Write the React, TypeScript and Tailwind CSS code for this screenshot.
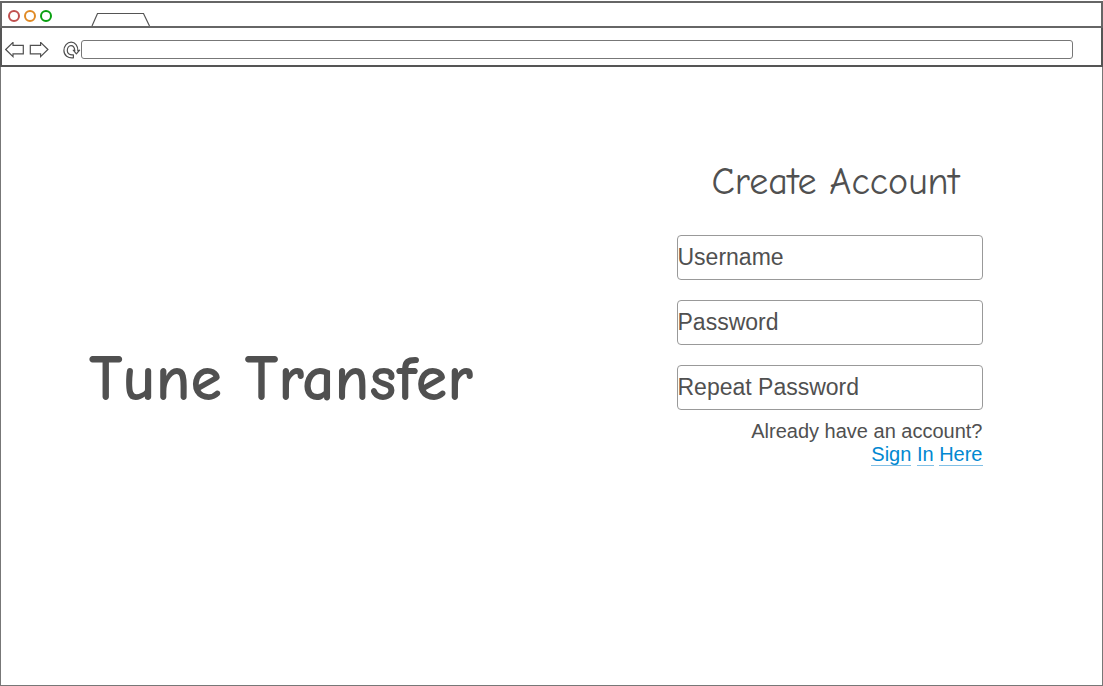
import React from "react";

const hand = "font-['Comic_Sans_MS','Comic_Neue','DejaVu_Sans',sans-serif]";

function TitleBar() {
  return (
    <div className="flex h-[27px] shrink-0 items-end border-x-2 border-y-2 border-[#666666] bg-white">
      <div className="flex gap-1 pb-1 pl-[6px]">
        <button type="button" aria-label="Close" className="size-3 rounded-full border-2 border-[#c0504f]" />
        <button type="button" aria-label="Minimize" className="size-3 rounded-full border-2 border-[#e08a24]" />
        <button type="button" aria-label="Maximize" className="size-3 rounded-full border-2 border-[#08a010]" />
      </div>
      <svg className="ml-[39px] h-[14px] w-[60px]" viewBox="0 0 60 14" fill="none" stroke="#555555" aria-hidden="true">
        <path d="M1 14L6.5 1.5H52.5L58.5 14" strokeWidth="1.2" />
      </svg>
    </div>
  );
}

function NavBar() {
  return (
    <div className="flex h-[39px] shrink-0 items-center border-x-2 border-b-2 border-[#555555] bg-white pt-[6px] pr-7 pl-[3px]">
      <button type="button" aria-label="Back">
        <svg className="h-4 w-5" viewBox="0 0 20 16" fill="none" stroke="#505050" strokeWidth="1.2">
          <path d="M0.7 7.5L8 0.4V3.4H18.3V11.8H8V14.6Z" />
        </svg>
      </button>
      <button type="button" aria-label="Forward" className="ml-1">
        <svg className="h-4 w-5" viewBox="0 0 20 16" fill="none" stroke="#505050" strokeWidth="1.2">
          <path d="M18.9 7.5L11.6 0.4V3.4H1.3V11.8H11.6V14.6Z" />
        </svg>
      </button>
      <button type="button" aria-label="Reload" className="ml-[14px]">
        <svg className="h-[18px] w-[18px]" viewBox="0 0 18 18" fill="none" stroke="#505050" strokeWidth="1.2" strokeLinejoin="round">
          <path d="M10.4 16.8V13.8C6.8 14.4 4.3 12.6 4.3 9.8C4.3 6.8 5.8 4.7 8 4.7C10.3 4.7 11.6 6.6 11.8 9.8L10.2 9.2L13.4 12.8L16.6 9.2L14.9 9.8C14.9 4.8 12.2 1.2 8.2 1.2C4.2 1.2 0.9 4.9 0.9 9.6C0.9 14.4 5 17.4 10.4 16.8Z" />
        </svg>
      </button>
      <input
        type="text"
        aria-label="Address"
        className="h-[19px] min-w-0 flex-1 rounded-[3px] border border-[#777777] bg-white px-1 text-xs outline-none"
      />
    </div>
  );
}

function Field({ label, type }: { label: string; type: string }) {
  return (
    <input
      type={type}
      aria-label={label}
      placeholder={label}
      className="block h-[45px] w-full rounded-[4px] border border-[#999999] bg-white text-[23px] text-[#505050] outline-none placeholder:text-[#505050] placeholder:opacity-100"
    />
  );
}

export default function App() {
  return (
    <div className="flex min-h-screen flex-col bg-white pt-px font-['Liberation_Sans',Arial,sans-serif] text-[#505050]">
      <TitleBar />
      <NavBar />
      <main className="grid flex-1 grid-cols-[560fr_537fr] items-start border-x border-b border-[#777777] pr-1">
        <h1 className={`${hand} pt-[276px] text-center text-[64px] leading-[72px] font-bold`}>Tune Transfer</h1>
        <form className="mx-auto w-full max-w-[306px] pt-[91px]" onSubmit={(e) => e.preventDefault()}>
          <h2 className={`${hand} pl-3 text-center text-[38px] leading-[48px] whitespace-nowrap`}>Create Account</h2>
          <div className="flex flex-col gap-5 pt-[29px]">
            <Field label="Username" type="text" />
            <Field label="Password" type="password" />
            <Field label="Repeat Password" type="password" />
          </div>
          <p className="pt-[10px] text-right text-[20px] leading-[23px]">
            Already have an account?
            <br />
            <a href="#sign-in" className="text-[#0288d1]">
              <span className="border-b border-[#7fbfe6]">Sign</span> <span className="border-b border-[#7fbfe6]">In</span>{" "}
              <span className="border-b border-[#7fbfe6]">Here</span>
            </a>
          </p>
        </form>
      </main>
    </div>
  );
}
